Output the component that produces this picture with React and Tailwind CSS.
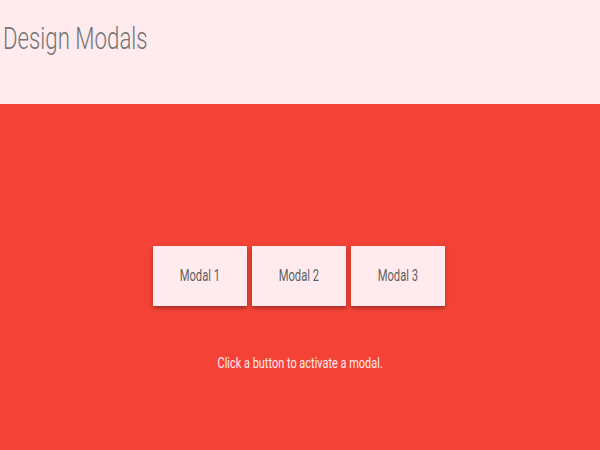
import React from "react";

const ModalButton = ({ label }) => (
  <button className="w-[94px] h-[60px] bg-[#ffebee] shadow-[0_2px_4px_rgba(0,0,0,0.35)] flex items-center justify-center">
    <span className="inline-block scale-x-[0.7] text-[16px] text-[#616161] whitespace-nowrap">{label}</span>
  </button>
);

export default function App() {
  return (
    <div className="w-[600px] h-[450px] flex flex-col overflow-hidden font-['Roboto',sans-serif]">
      <header className="h-[104px] bg-[#ffebee] pl-[3px] pt-[14px]">
        <h1 className="inline-block origin-left scale-x-[0.695] text-[32px] font-light text-[#757575] whitespace-nowrap">
          Design Modals
        </h1>
      </header>
      <main className="flex-1 bg-[#f44336] flex flex-col items-center pt-[142px]">
        <div className="flex gap-[5px] pr-[3px]">
          <ModalButton label="Modal 1" />
          <ModalButton label="Modal 2" />
          <ModalButton label="Modal 3" />
        </div>
        <p className="mt-[46px] scale-x-[0.73] text-[15px] text-[#ffebee] whitespace-nowrap">
          Click a button to activate a modal.
        </p>
      </main>
    </div>
  );
}
